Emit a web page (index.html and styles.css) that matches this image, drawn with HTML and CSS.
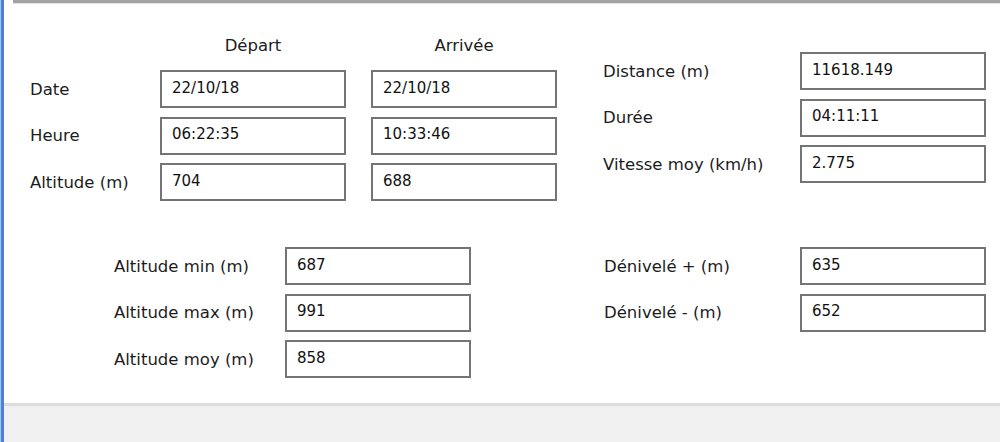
FILE: index.html
```html
<!DOCTYPE html>
<html lang="fr">

<head>
  <meta charset="UTF-8">
  <title>Statistiques du parcours</title>
  <link rel="stylesheet" href="styles.css">
</head>

<body>
  <div class="window">
    <div class="edge"></div>
    <div class="content">
      <div class="topbar"></div>

      <div class="form">
        <div class="upper">
          <div class="times">
            <span></span>
            <div class="col-head">Départ</div>
            <div class="col-head">Arrivée</div>

            <label>Date</label>
            <input class="field" readonly value="22/10/18">
            <input class="field" readonly value="22/10/18">

            <label>Heure</label>
            <input class="field" readonly value="06:22:35">
            <input class="field" readonly value="10:33:46">

            <label>Altitude (m)</label>
            <input class="field" readonly value="704">
            <input class="field" readonly value="688">
          </div>

          <div class="totals">
            <label>Distance (m)</label>
            <input class="field" readonly value="11618.149">

            <label>Durée</label>
            <input class="field" readonly value="04:11:11">

            <label>Vitesse moy (km/h)</label>
            <input class="field" readonly value="2.775">
          </div>
        </div>

        <div class="lower">
          <div class="altitudes">
            <label>Altitude min (m)</label>
            <input class="field" readonly value="687">

            <label>Altitude max (m)</label>
            <input class="field" readonly value="991">

            <label>Altitude moy (m)</label>
            <input class="field" readonly value="858">
          </div>

          <div class="elevation">
            <label>Dénivelé + (m)</label>
            <input class="field" readonly value="635">

            <label>Dénivelé - (m)</label>
            <input class="field" readonly value="652">
          </div>
        </div>
      </div>

      <div class="footer"></div>
    </div>
  </div>
</body>

</html>
```

FILE: styles.css
```css
html,
body {
  margin: 0;
  height: 100%;
  overflow: hidden;
  background: #ffffff;
}

body {
  font-family: "DejaVu Sans", Verdana, sans-serif;
  font-size: 16.5px;
  color: #1c1c1c;
}

.window {
  display: flex;
  height: 442px;
}

.edge {
  flex-shrink: 0;
  width: 3px;
  background: #4a82d6;
  border-left: 1px solid #a9c3ea;
}

.content {
  flex: 1;
  min-width: 0;
  display: flex;
  flex-direction: column;
}

.topbar {
  height: 3px;
  margin-left: 9px;
  background: #a3a3a3;
  border-bottom: 1px solid #e3e3e3;
}

.form {
  height: 399px;
  padding-left: 26px;
  box-sizing: border-box;
}

/* top block: start / end values and totals */
.upper {
  display: flex;
  align-items: flex-start;
  padding-top: 32px;
}

.times {
  display: grid;
  grid-template-columns: 105px 186px 186px;
  grid-template-rows: 25.5px repeat(3, 38px);
  column-gap: 25px;
  row-gap: 8.5px;
  align-items: center;
}

.col-head {
  align-self: start;
  line-height: 20px;
  text-align: center;
}

.totals {
  display: grid;
  grid-template-columns: 197px 186px;
  grid-auto-rows: 38px;
  row-gap: 8.7px;
  align-items: center;
  margin-top: 16px;
  margin-left: 46px;
}

/* bottom block: altitude stats and elevation */
.lower {
  display: flex;
  align-items: flex-start;
  margin-top: 46px;
}

.altitudes {
  display: grid;
  grid-template-columns: 171px 186px;
  grid-auto-rows: 38px;
  row-gap: 8.5px;
  align-items: center;
  margin-left: 84px;
}

.elevation {
  display: grid;
  grid-template-columns: 196px 186px;
  grid-auto-rows: 38px;
  row-gap: 8.5px;
  align-items: center;
  margin-left: 133px;
}

label {
  white-space: nowrap;
}

.field {
  box-sizing: border-box;
  width: 186px;
  height: 38px;
  margin: 0;
  padding: 0 0 3px 10px;
  border: 2px solid #747474;
  border-radius: 0;
  background: #ffffff;
  font-family: "DejaVu Sans", Verdana, sans-serif;
  font-size: 15px;
  color: #111111;
  outline: none;
}

.footer {
  flex: 1;
  background: #f0f0f0;
  border-top: 3px solid #dcdcdc;
}
```
